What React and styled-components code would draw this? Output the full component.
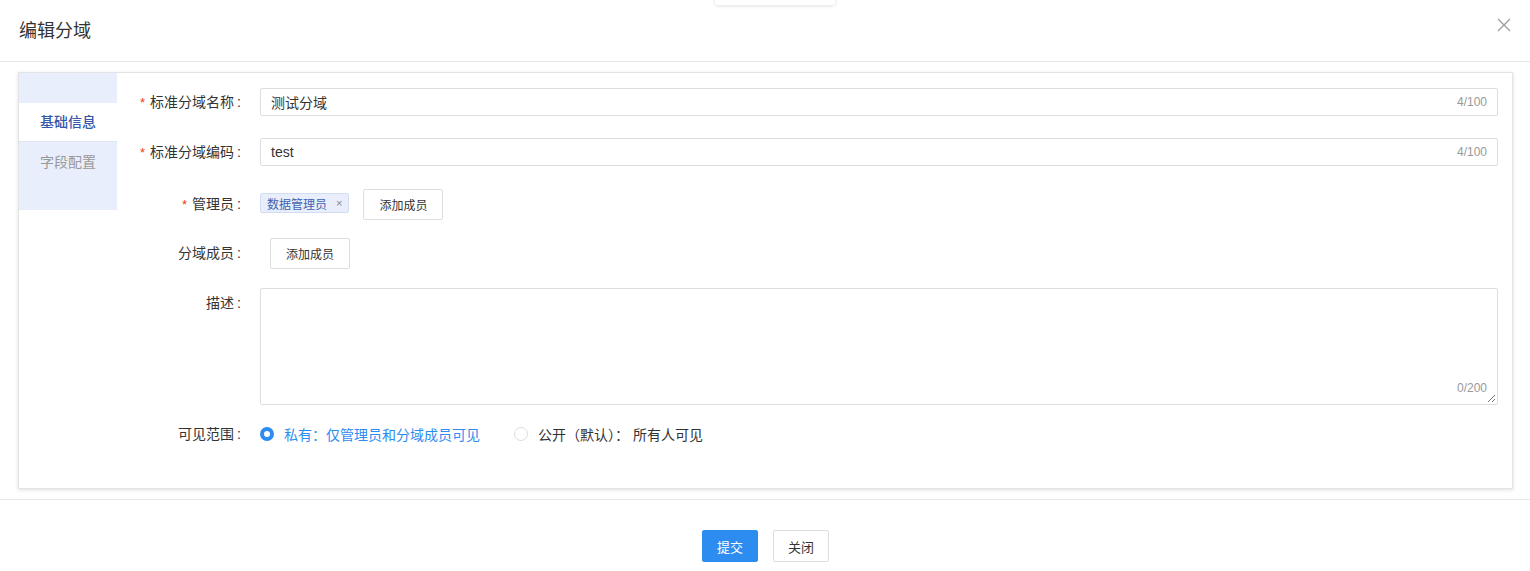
import React from 'react';
import styled, { createGlobalStyle } from 'styled-components';

const GlobalStyle = createGlobalStyle`
  html, body {
    margin: 0;
    padding: 0;
    background: #fff;
  }
  body {
    font-family: "Liberation Sans", "Noto Sans CJK SC", sans-serif;
    color: #333;
  }
  * {
    box-sizing: border-box;
  }
`;

const StyledModal = styled.div`
  position: relative;
  width: 1530px;
  height: 571px;
  background: #fff;
  overflow: hidden;
`;

const StyledPeek = styled.div`
  position: absolute;
  top: -30px;
  left: 715px;
  width: 120px;
  height: 35px;
  background: #fff;
  border-radius: 3px;
  box-shadow: 0 1px 4px rgba(0, 0, 0, 0.12);
`;

const StyledHeader = styled.header`
  height: 62px;
  display: flex;
  align-items: center;
  justify-content: space-between;
  padding: 0 19px 4px 19px;
  border-bottom: 1px solid #e8e8e8;

  h1 {
    margin: 0;
    font-size: 18px;
    font-weight: 400;
    color: #333;
  }
`;

const CloseButton = styled.button`
  border: 0;
  background: none;
  padding: 0;
  width: 16px;
  height: 16px;
  display: flex;
  align-items: center;
  justify-content: center;
  cursor: pointer;
  margin-bottom: 8px;
  margin-right: -1px;
`;

const StyledBody = styled.div`
  padding: 10px 17px 10px 18px;
  border-bottom: 1px solid #e8e8e8;
`;

const StyledCard = styled.div`
  display: flex;
  height: 417px;
  border: 1px solid #e4e4e4;
  box-shadow: 0 1px 4px rgba(0, 0, 0, 0.13);
  background: #fff;
`;

const StyledSide = styled.nav`
  width: 98px;
  flex-shrink: 0;
  display: flex;
  flex-direction: column;

  .side-top {
    height: 30px;
    background: #e9eefc;
  }
`;

const Tab = styled.div`
  height: ${(p) => (p.$active ? '38px' : '69px')};
  line-height: ${(p) => (p.$active ? '38px' : '40px')};
  text-align: center;
  font-size: 14px;
  font-weight: ${(p) => (p.$active ? 500 : 400)};
  color: ${(p) => (p.$active ? '#3558a8' : '#999')};
  background: ${(p) => (p.$active ? '#fff' : '#e9eefc')};
  border-top: ${(p) => (p.$active ? 'none' : '1px solid #dfe5f3')};
  cursor: pointer;
`;

const StyledForm = styled.form`
  flex: 1;
  padding: 14px 14px 0 0;
  display: flex;
  flex-direction: column;
`;

const Row = styled.div`
  display: flex;
  align-items: flex-start;
  min-height: 30px;
  margin-bottom: ${(p) => p.$gap || 20}px;
`;

const Label = styled.label`
  width: 131px;
  flex-shrink: 0;
  padding-right: 7px;
  text-align: right;
  font-size: 14px;
  line-height: 30px;
  color: #333;

  &::before {
    content: ${(p) => (p.$required ? "'*'" : "''")};
    color: #ed4014;
    margin-right: 5px;
    font-size: 13px;
  }

  &::after {
    content: ':';
    margin-left: 3px;
  }
`;

const Control = styled.div`
  flex: 1;
  margin-left: 12px;
  display: flex;
  align-items: center;
  min-height: 30px;
  position: relative;
`;

const InputBox = styled.div`
  flex: 1;
  height: 28px;
  border: 1px solid #dcdee2;
  border-radius: 2px;
  display: flex;
  align-items: center;
  padding: 0 10px 0 10px;

  span:first-child {
    flex: 1;
    font-size: 14px;
    color: #333;
  }
`;

const Counter = styled.span`
  font-size: 12px;
  color: #999;
`;

const TextArea = styled.div`
  flex: 1;
  height: 117px;
  border: 1px solid #dcdee2;
  border-radius: 2px;
  position: relative;

  ${Counter} {
    position: absolute;
    right: 10px;
    bottom: 9px;
  }

  svg {
    position: absolute;
    right: 1px;
    bottom: 1px;
  }
`;

const Tag = styled.span`
  display: inline-flex;
  align-items: center;
  height: 20px;
  padding: 0 6px 0 6px;
  background: #e8eefb;
  border: 1px solid #d3ddf2;
  border-radius: 2px;
  font-size: 12px;
  color: #3f63b1;
  margin-right: 14px;
  margin-bottom: 3px;

  i {
    font-style: normal;
    color: #888;
    font-size: 11px;
    margin-left: 9px;
  }
`;

const Button = styled.button`
  height: ${(p) => (p.$tall ? 32 : 31)}px;
  width: ${(p) => p.$width || 80}px;
  margin-left: ${(p) => p.$offset || 0}px;
  border: 1px solid ${(p) => (p.$primary ? '#2d8cf0' : '#dcdee2')};
  background: ${(p) => (p.$primary ? '#2d8cf0' : '#fff')};
  color: ${(p) => (p.$primary ? '#fff' : '#333')};
  border-radius: 2px;
  font-family: inherit;
  font-size: ${(p) => (p.$tall ? 13 : 12)}px;
  padding: 0;
  cursor: pointer;
`;

const RadioGroup = styled.div`
  display: flex;
  align-items: center;
  gap: 34px;
  height: 20px;
`;

const Radio = styled.label`
  display: flex;
  align-items: center;
  font-size: 14px;
  color: ${(p) => (p.$checked ? '#2d8cf0' : '#333')};

  b {
    width: 14px;
    height: 14px;
    border-radius: 50%;
    margin-right: 10px;
    border: ${(p) => (p.$checked ? '4px solid #2d8cf0' : '1px solid #dcdee2')};
    background: #fff;
  }
`;

const StyledFooter = styled.footer`
  display: flex;
  justify-content: center;
  gap: 15px;
  padding-top: 30px;
  padding-left: 1px;
`;

const CloseIcon = () => (
  <svg width="14" height="14" viewBox="0 0 14 14">
    <path d="M1 1 L13 13 M13 1 L1 13" stroke="#999" strokeWidth="1.2" fill="none" />
  </svg>
);

const ResizeGrip = () => (
  <svg width="9" height="9" viewBox="0 0 9 9">
    <path d="M1 8 L8 1 M5 8 L8 5" stroke="#777" strokeWidth="1" fill="none" />
  </svg>
);

const App = () => (
  <StyledModal>
    <GlobalStyle />
    <StyledPeek />
    <StyledHeader>
      <h1>编辑分域</h1>
      <CloseButton aria-label="close">
        <CloseIcon />
      </CloseButton>
    </StyledHeader>

    <StyledBody>
      <StyledCard>
        <StyledSide>
          <div className="side-top" />
          <Tab $active>基础信息</Tab>
          <Tab>字段配置</Tab>
        </StyledSide>

        <StyledForm>
          <Row $gap={19}>
            <Label $required>标准分域名称</Label>
            <Control>
              <InputBox>
                <span>测试分域</span>
                <Counter>4/100</Counter>
              </InputBox>
            </Control>
          </Row>
          <Row $gap={21}>
            <Label $required>标准分域编码</Label>
            <Control>
              <InputBox>
                <span>test</span>
                <Counter>4/100</Counter>
              </InputBox>
            </Control>
          </Row>
          <Row $gap={18}>
            <Label $required>管理员</Label>
            <Control>
              <Tag>
                数据管理员<i>×</i>
              </Tag>
              <Button type="button">添加成员</Button>
            </Control>
          </Row>
          <Row $gap={19}>
            <Label>分域成员</Label>
            <Control>
              <Button type="button" $offset={10}>添加成员</Button>
            </Control>
          </Row>
          <Row $gap={14}>
            <Label>描述</Label>
            <Control>
              <TextArea>
                <Counter>0/200</Counter>
                <ResizeGrip />
              </TextArea>
            </Control>
          </Row>
          <Row>
            <Label>可见范围</Label>
            <Control>
              <RadioGroup>
                <Radio $checked>
                  <b />
                  私有：仅管理员和分域成员可见
                </Radio>
                <Radio>
                  <b />
                  公开（默认）： 所有人可见
                </Radio>
              </RadioGroup>
            </Control>
          </Row>
        </StyledForm>
      </StyledCard>
    </StyledBody>

    <StyledFooter>
      <Button type="button" $primary $tall $width={56}>提交</Button>
      <Button type="button" $tall $width={56}>关闭</Button>
    </StyledFooter>
  </StyledModal>
);

export default App;
